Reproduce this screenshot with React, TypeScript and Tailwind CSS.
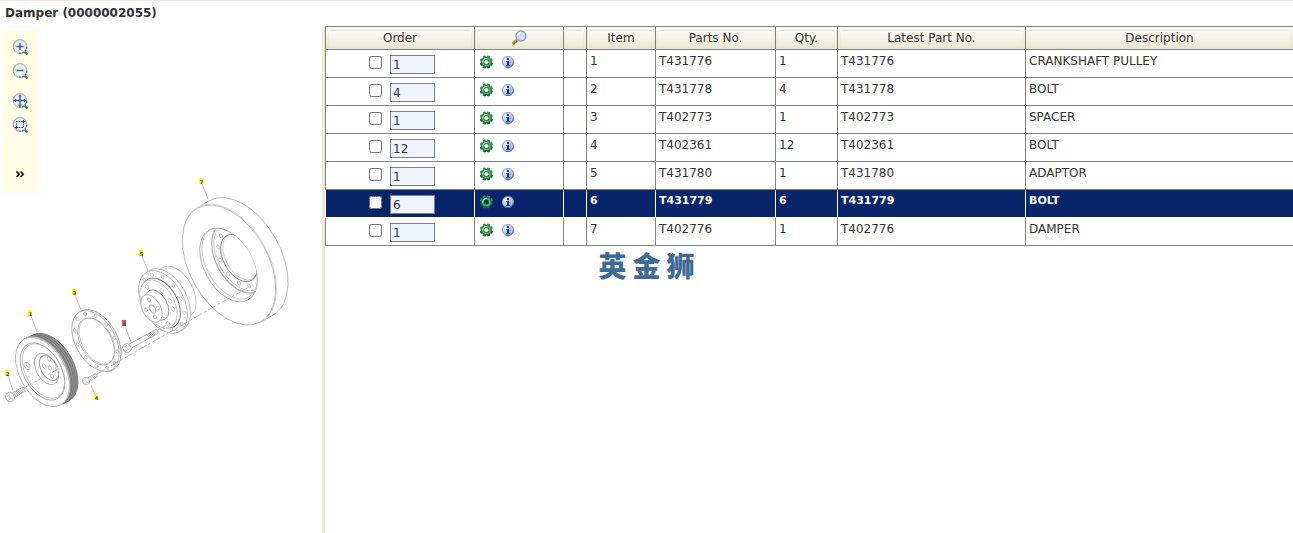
import * as React from 'react';
import { useState } from 'react';

interface Part {
    item: number
    qty: number
    partNo: string
    description: string
}

const PARTS: Part[] = [
    { item: 1, qty: 1, partNo: "T431776", description: "CRANKSHAFT PULLEY" },
    { item: 2, qty: 4, partNo: "T431778", description: "BOLT" },
    { item: 3, qty: 1, partNo: "T402773", description: "SPACER" },
    { item: 4, qty: 12, partNo: "T402361", description: "BOLT" },
    { item: 5, qty: 1, partNo: "T431780", description: "ADAPTOR" },
    { item: 6, qty: 6, partNo: "T431779", description: "BOLT" },
    { item: 7, qty: 1, partNo: "T402776", description: "DAMPER" },
]

const CALLOUTS = [
    { item: 1, x: 30, y: 313, toX: 37, toY: 332 },
    { item: 2, x: 7, y: 373, toX: 13, toY: 390 },
    { item: 3, x: 74, y: 292, toX: 81, toY: 310 },
    { item: 4, x: 96, y: 397, toX: 91, toY: 385 },
    { item: 5, x: 141, y: 253, toX: 148, toY: 271 },
    { item: 6, x: 124, y: 323, toX: 131, toY: 342 },
    { item: 7, x: 201, y: 181, toX: 208, toY: 199 },
]

/* Every round face in the drawing shares the same projection */
function Disc(props: { x: number, y: number, r: number, fill?: string, stroke?: string, width?: number }) {
    return (
        <ellipse
            rx={props.r}
            ry={props.r * 0.606}
            transform={`translate(${props.x} ${props.y}) rotate(61)`}
            fill={props.fill ?? "none"}
            stroke={props.stroke ?? "#bdbdbd"}
            strokeWidth={props.width ?? 0.8}
        />
    )
}

function Holes(props: { at: number[][], r: number }) {
    return (
        <>
            {props.at.map(([x, y]) => <Disc key={x + "-" + y} x={x} y={y} r={props.r} fill="#fff" />)}
        </>
    )
}

/* Holes spread evenly round a disc */
function HoleRing(props: { x: number, y: number, ring: number, count: number, r: number }) {
    const at = Array.from({ length: props.count }, (_, i) => {
        const t = (i / props.count) * Math.PI * 2 + 0.2
        const u = Math.cos(t) * props.ring
        const v = Math.sin(t) * props.ring * 0.606
        return [props.x + u * 0.485 - v * 0.875, props.y + u * 0.875 + v * 0.485]
    })
    return <Holes at={at} r={props.r} />
}

function Bolt(props: { x: number, y: number, length: number, thread: number, scale: number }) {
    const threads = []
    for (let t = props.length - props.thread; t < props.length; t += 1.6) {
        threads.push(<path key={t} d={`M${t} -2.4l1 4.8`} strokeWidth="0.8" />)
    }
    return (
        <g
            transform={`translate(${props.x} ${props.y}) rotate(-29) scale(${props.scale})`}
            fill="#fff"
            stroke="#a8a8a8"
            strokeWidth="0.8"
        >
            <path d={`M3 -2.4H${props.length}q2 2.4 0 4.8H3z`} />
            {threads}
            <path d="M-4 -2.5L-1.5 -4.8L3 -4.2L4.2 0L3 4.2L-1.5 4.8L-4 2.5z" />
            <path d="M-4 -2.5L0 -1.8L3 -4.2M0 -1.8V2L-4 2.5M0 2L3 4.2" fill="none" strokeWidth="0.5" />
        </g>
    )
}

function DamperDrawing() {
    return (
        <svg
            viewBox="0 26 322 384"
            className="col-start-1 row-start-1 w-full"
            role="img"
            aria-label="Exploded view of the damper"
        >
            <defs>
                <clipPath id="recess">
                    <ellipse rx="40" ry="24.3" transform="translate(228.5 265) rotate(61)" />
                </clipPath>
                <clipPath id="bore">
                    <ellipse rx="25.5" ry="15.5" transform="translate(239 258) rotate(61)" />
                </clipPath>
            </defs>

            {/* Damper */}
            <Disc x={241} y={258} r={65.5} fill="#fff" stroke="#b0b0b0" />
            <path d="M197 208L209 201L273 315L261 322z" fill="#fff" />
            <path d="M197 208L209 201M261 322L273 315" stroke="#b0b0b0" strokeWidth="0.8" />
            <Disc x={229.5} y={264.5} r={65.5} fill="#fff" stroke="#ccc" />
            <Disc x={229} y={265} r={65} fill="#fff" stroke="#b4b4b4" />
            <Disc x={228.5} y={265} r={40} fill="#fff" stroke="#a4a4a4" />
            <g clipPath="url(#recess)">
                <Disc x={230} y={263} r={39} />
                <Disc x={239} y={258} r={38} stroke="#b0b0b0" width={1.2} />
                <Disc x={240} y={257} r={36.5} />
                <Disc x={239} y={258} r={25.5} fill="#fff" stroke="#888" width={1} />
                <g clipPath="url(#bore)">
                    <Disc x={241} y={256.5} r={25.5} />
                </g>
            </g>
            <Holes at={[[221, 236], [218, 247], [220, 260], [228, 274], [239, 283], [249, 286]]} r={2.2} />

            {/* Adaptor */}
            <Disc x={176} y={292} r={28} fill="#fff" />
            <path d="M154 273L168 268L190 314L184 322z" fill="#fff" />
            <path d="M158 270L167 269M183 321L190 314" stroke="#bbb" strokeWidth="0.7" />
            <Disc x={166} y={300} r={34} fill="#fff" stroke="#aaa" />
            <Disc x={163} y={302} r={34} fill="#fff" stroke="#aaa" />
            <HoleRing x={163} y={302} ring={29.5} count={12} r={2} />
            <Disc x={161} y={303} r={27} fill="#fff" stroke="#777" width={1} />
            <Disc x={158.5} y={304} r={26} fill="#fff" />
            <Holes at={[[147, 287], [162, 291], [170, 301], [173, 309], [168, 324]]} r={2.6} />
            <Disc x={157} y={305} r={16.5} fill="#fff" stroke="#888" />
            <Disc x={151.5} y={308.5} r={15} fill="#fff" stroke="#a4a4a4" />
            <Disc x={152.5} y={309} r={4.5} stroke="#999" />
            <Holes at={[[149, 300], [158, 308], [155, 317], [146, 310]]} r={2.1} />

            {/* Spacer */}
            <Disc x={97} y={340.5} r={33.5} fill="#fff" stroke="#999" />
            <Disc x={95.5} y={341} r={33} fill="#fff" stroke="#a8a8a8" />
            <HoleRing x={96} y={341} ring={29.5} count={12} r={2} />
            <Disc x={96} y={341.5} r={25.5} fill="#fff" stroke="#a8a8a8" />
            <Disc x={97} y={341} r={25} />

            {/* Pulley, with the belt grooves round its rim */}
            {[9, 8, 7, 6, 5, 4, 3, 2, 1].map(step => (
                <Disc
                    key={step}
                    x={42 + step}
                    y={372 - step * 0.45}
                    r={37.5}
                    fill="#999"
                    stroke={step % 2 ? "#666" : "#8c8c8c"}
                    width={0.7}
                />
            ))}
            <Disc x={43} y={371.5} r={37.5} fill="#fff" />
            <Disc x={42.5} y={372} r={37.5} fill="#fff" stroke="#b4b4b4" />
            <Disc x={42.5} y={371.5} r={31} stroke="#999" />
            <Disc x={43.5} y={371} r={29.5} />
            <Disc x={46.5} y={369} r={17} stroke="#a0a0a0" />
            <Disc x={49} y={368} r={13.5} stroke="#999" width={1} />
            <Holes at={[[49, 359], [44, 366], [50, 368], [52, 376], [57, 369]]} r={2.4} />
            <Holes at={[[27, 366]]} r={4} />
            <Holes at={[[28, 365]]} r={2.5} />

            {/* Centre lines */}
            <g stroke="#b0b0b0" strokeWidth="0.9" strokeDasharray="9 2 3 2" fill="none">
                <path d="M24 388L58 369" />
                <path d="M97 374L121 360L210 309L249 287" />
                <path d="M158 330L170 323" />
            </g>

            <Bolt x={10} y={397} length={16} thread={11} scale={1} />
            <Bolt x={86} y={381} length={15} thread={10} scale={0.8} />
            <Bolt x={127} y={348} length={36} thread={11} scale={0.95} />

            {/* Callouts */}
            {CALLOUTS.map(c => (
                <g key={c.item}>
                    <path d={`M${c.x + 1} ${c.y + 3}L${c.toX} ${c.toY}`} stroke="#b4b4b4" strokeWidth="0.8" />
                    <rect
                        x={c.x - 2}
                        y={c.y - 3}
                        width="4"
                        height="6"
                        fill={c.item === 6 ? "#e85050" : "#ffff00"}
                    />
                    <text
                        x={c.x + 0.5}
                        y={c.y + 3}
                        textAnchor="middle"
                        fontSize="5"
                        fontWeight="bold"
                        fill="#444"
                    >
                        {c.item}
                    </text>
                </g>
            ))}
        </svg>
    )
}

function ToolButton(props: { label: string, children: React.ReactNode }) {
    return (
        <button type="button" aria-label={props.label} className="size-4">
            <svg viewBox="0 0 16 16" className="size-4" fill="none">
                <path d="M12.5 13L15.5 15.5" stroke="#666" strokeWidth="2.2" />
                <circle cx="8" cy="7.5" r="6.8" fill="#e9effa" stroke="#b3b5ba" strokeWidth="1.2" />
                <path d="M14.8 8A6.8 6.8 0 0 1 6.5 14.1" stroke="#5d7fae" strokeWidth="1.3" strokeDasharray="2 1" />
                {props.children}
            </svg>
        </button>
    )
}

function Toolbar() {
    return (
        <div className="z-10 col-start-1 row-start-1 self-start justify-self-start border-y border-r border-[#ffffe6] p-[3px]">
            <div className="flex h-[162px] w-9 flex-col bg-[#ffffe6] pt-[9px] pl-[9px]">
                <ToolButton label="Zoom in">
                    <path d="M8 4V11M4.5 7.5H11.5" stroke="#33628f" strokeWidth="1.4" />
                </ToolButton>
                <div className="h-2" />
                <ToolButton label="Zoom out">
                    <path d="M4.5 7.5H11.5" stroke="#33628f" strokeWidth="1.4" />
                </ToolButton>
                <div className="h-[14px]" />
                <ToolButton label="Fit to window">
                    <path d="M8 1.5V14M1.5 7.5H14.5" stroke="#33628f" strokeWidth="1.3" />
                    <path
                        d="M6.5 3H9.5M6.5 12H9.5M3.5 6V9M12.5 6V9"
                        stroke="#33628f"
                    />
                </ToolButton>
                <div className="h-2" />
                <ToolButton label="Zoom to area">
                    <path d="M4 4.5H11M4 10.5H11" stroke="#26456e" strokeDasharray="1.6 1" />
                    <path d="M4.5 4V11M11.5 4V10" stroke="#26456e" strokeDasharray="1.6 1" />
                    <path d="M10 4.5H13.5M11.5 3V6M2.5 10.5H6M4.5 9V12" stroke="#26456e" strokeWidth="1.2" />
                </ToolButton>
                <button type="button" aria-label="Expand" className="mt-[34px] size-4">
                    <svg viewBox="0 0 16 16" className="size-4" fill="none" stroke="#000" strokeWidth="1.6">
                        <path d="M4.5 4.5L7.2 7.2L4.5 10M8.5 4.5L11.2 7.2L8.5 10" />
                    </svg>
                </button>
            </div>
        </div>
    )
}

function MagnifierIcon() {
    return (
        <svg viewBox="0 0 16 16" className="size-4" fill="none">
            <path d="M6.5 9.5L5 11" stroke="#8b8b95" strokeWidth="2" />
            <path d="M5.6 10.6L2 14" stroke="#b3590f" strokeWidth="2.8" />
            <path d="M5 10.6L2 13.4" stroke="#f0a040" />
            <circle cx="10" cy="6" r="5" fill="#cfe0fa" stroke="#9299c4" strokeWidth="1.5" />
            <path d="M7 5.5A3 3 0 0 1 10 2.8" stroke="#fff" strokeWidth="1.6" />
        </svg>
    )
}

const GEAR_TEETH = [0, 45, 90, 135, 180, 225, 270, 315]

function GearIcon() {
    return (
        <svg viewBox="0 0 14 14" className="size-3.5" fill="none">
            {GEAR_TEETH.map(angle => (
                <rect
                    key={angle}
                    x="5.9"
                    y="0.4"
                    width="3"
                    height="3"
                    rx="0.6"
                    fill={angle > 60 && angle < 250 ? "#17602f" : "#3d8f55"}
                    transform={`rotate(${angle + 22} 7.4 7)`}
                />
            ))}
            <circle cx="7.4" cy="7" r="3.7" stroke="#1f7a3f" strokeWidth="3.2" />
            <circle cx="7.4" cy="7" r="3.6" stroke="#5cb377" strokeWidth="1.5" />
            <path d="M3.8 7.5A3.7 3.7 0 0 1 8 3.4" stroke="#b5e3bf" />
        </svg>
    )
}

function InfoIcon() {
    return (
        <svg viewBox="0 0 14 14" className="size-3.5">
            <defs>
                <linearGradient id="info" x1="0" y1="0" x2="1" y2="1">
                    <stop offset="0.2" stopColor="#e6ebf3" />
                    <stop offset="1" stopColor="#7f9fd0" />
                </linearGradient>
            </defs>
            <circle cx="7" cy="7" r="5.6" fill="url(#info)" stroke="#8299bf" />
            <path d="M12.6 7.5A5.6 5.6 0 0 1 4.5 12" fill="none" stroke="#3c5f9c" />
            <path d="M6 3H8V5H6zM5 6H8V10H9V11H5V10H6V7H5z" fill="#143a7c" />
        </svg>
    )
}

function HeaderCell(props: { children?: React.ReactNode, first?: boolean, last?: boolean }) {
    return (
        <th
            scope="col"
            className={
                "border-y border-[#808080] bg-linear-to-b from-[#fafaf0] to-[#e8e5d0] px-[3px] pt-[3px] pb-[3px] font-normal "
                + (props.first ? "border-l " : "")
                + (props.last ? "" : "border-r")
            }
        >
            <div className="h-4 border-t border-[#e6e2cc] bg-linear-to-b from-[#fcfcf6] to-[#ecead8]">
                <div className="flex h-[14px] items-center justify-center leading-[14px] whitespace-nowrap">
                    {props.children}
                </div>
            </div>
        </th>
    )
}

function PartRow(props: { part: Part, selected: boolean, onSelect: () => void }) {

    const { part, selected } = props

    const cell = "h-7 border-b align-top "
        + (selected ? "border-white " : "border-[#808080] ")
    const textCell = cell + "pt-[3px] pl-[3px] leading-4 "

    return (
        <tr
            onClick={props.onSelect}
            className={selected ? "bg-[#08246b] text-[11px] font-bold text-white" : "bg-white"}
        >
            <td className={cell + "border-x"}>
                <div className="flex items-start justify-center gap-2 pt-[5px] pl-1">
                    <input
                        type="checkbox"
                        aria-label={"Order item " + part.item}
                        className="mt-px size-[13px]"
                    />
                    <input
                        type="text"
                        aria-label={"Order quantity for item " + part.item}
                        defaultValue={part.qty}
                        className="h-[19px] w-[45px] border border-[#808080] bg-[#edf4fd] px-0.5 text-xs font-normal text-[#333]"
                    />
                </div>
            </td>
            <td className={cell + "border-r"}>
                <div className="flex gap-2 pt-[5px] pl-1">
                    <button type="button" aria-label={"Service details for item " + part.item} className="size-3.5">
                        <GearIcon />
                    </button>
                    <button type="button" aria-label={"Information on item " + part.item} className="size-3.5">
                        <InfoIcon />
                    </button>
                </div>
            </td>
            <td className={cell + "border-r"}></td>
            <td className={textCell + "border-r"}>{part.item}</td>
            <td className={textCell + "border-r"}>{part.partNo}</td>
            <td className={textCell + "border-r"}>{part.qty}</td>
            <td className={textCell + "border-r"}>{part.partNo}</td>
            <td className={textCell}>{part.description}</td>
        </tr>
    )
}

export default function App() {

    const [selectedItem, setSelectedItem] = useState(6)

    return (
        <div className="relative flex min-h-screen flex-col border-t border-[#eee7d3] bg-white font-['DejaVu_Sans',Verdana,sans-serif] text-xs text-[#333]">

            <h1 className="h-[25px] pt-1 pl-[5px] leading-4 font-bold">Damper (0000002055)</h1>

            <div className="flex grow">

                <div className="grid w-[325px] shrink-0 content-start border-r-3 border-[#efe8d4]">
                    <DamperDrawing />
                    <Toolbar />
                </div>

                <div className="min-w-0 grow">
                    <table className="w-full table-fixed border-separate border-spacing-0">
                        <colgroup>
                            <col className="w-[150px]" />
                            <col className="w-[89px]" />
                            <col className="w-[23px]" />
                            <col className="w-[69px]" />
                            <col className="w-[120px]" />
                            <col className="w-[62px]" />
                            <col className="w-[188px]" />
                            <col />
                        </colgroup>
                        <thead>
                            <tr>
                                <HeaderCell first>Order</HeaderCell>
                                <HeaderCell><MagnifierIcon /></HeaderCell>
                                <HeaderCell />
                                <HeaderCell>Item</HeaderCell>
                                <HeaderCell>Parts No.</HeaderCell>
                                <HeaderCell>Qty.</HeaderCell>
                                <HeaderCell>Latest Part No.</HeaderCell>
                                <HeaderCell last>Description</HeaderCell>
                            </tr>
                        </thead>
                        <tbody>
                            {PARTS.map(part => (
                                <PartRow
                                    key={part.item}
                                    part={part}
                                    selected={part.item === selectedItem}
                                    onSelect={() => setSelectedItem(part.item)}
                                />
                            ))}
                        </tbody>
                    </table>
                </div>

            </div>

            {/* Watermark over the middle of the page */}
            <div className="pointer-events-none absolute inset-0 flex items-center justify-center gap-1.5 pb-1 font-['Noto_Sans_CJK_SC',sans-serif] text-[28px] leading-none font-black text-[#3f6a96]">
                <span>英</span>
                <span>金</span>
                <span>狮</span>
            </div>

        </div>
    )
}
